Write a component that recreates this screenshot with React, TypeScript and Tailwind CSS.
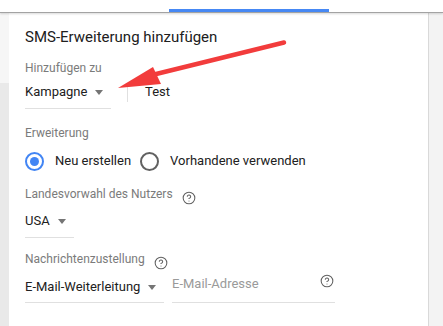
import { CircleHelp } from "lucide-react";

function Caret() {
  return <span className="ml-[8px] inline-block w-0 h-0 border-l-[4px] border-r-[4px] border-t-[5px] border-l-transparent border-r-transparent border-t-[#757575]" />;
}

function Help({ className = "" }: { className?: string }) {
  return <CircleHelp size={14} strokeWidth={1.8} className={"text-[#616161] " + className} />;
}

function Label({ children, className = "" }: { children: React.ReactNode; className?: string }) {
  return <div className={"text-[12px] leading-[16px] text-[#7b7b7b] whitespace-nowrap " + className}>{children}</div>;
}

export default function App() {
  return (
    <div className="relative w-[443px] h-[326px] overflow-hidden bg-[#f3f3f3] flex flex-col" style={{ fontFamily: "Roboto, 'Noto Sans', sans-serif" }}>
      {/* top tab strip */}
      <div className="h-[13px] bg-white border-b border-[#a3a3a3] shadow-[0_1px_2px_rgba(0,0,0,0.15)] flex items-end shrink-0 z-10">
        <div className="ml-[169px] w-[160px] h-[3px] bg-[#4688f4]" />
      </div>

      <div className="flex flex-1">
        <div className="w-[9px] flex flex-col">
          <div className="h-[70px] bg-[#f6f6f6]" />
          <div className="flex-1 bg-[#e9e9e9]" />
        </div>

        <div className="w-[420px] bg-white border-r border-[#d9d9d9] pl-[16px] pt-[14px] text-[#212121]">
          <div className="text-[15px] leading-[20px] text-[#202020]">SMS-Erweiterung hinzufügen</div>

          <Label className="mt-[13px]">Hinzufügen zu</Label>
          <div className="mt-[6px] flex h-[27px] text-[13px] leading-[20px]">
            <div className="w-[86px] border-b border-[#e0e0e0] flex items-start">
              <span className="flex items-center whitespace-nowrap">
                Kampagne
                <Caret />
              </span>
            </div>
            <div className="ml-[16px] mt-[3px] w-px h-[17px] bg-[#e0e0e0]" />
            <span className="ml-[17px]">Test</span>
          </div>

          <Label className="mt-[16px]">Erweiterung</Label>
          <div className="mt-[10px] flex items-center h-[20px] text-[13px] leading-[20px] whitespace-nowrap">
            <span className="w-[19px] h-[19px] rounded-full border-2 border-[#4285f4] flex items-center justify-center">
              <span className="w-[9px] h-[9px] rounded-full bg-[#4285f4]" />
            </span>
            <span className="ml-[11px]">Neu erstellen</span>
            <span className="ml-[9px] w-[19px] h-[19px] rounded-full border-2 border-[#616161]" />
            <span className="ml-[11px]">Vorhandene verwenden</span>
          </div>

          <div className="mt-[15px] flex items-start">
            <Label>Landesvorwahl des Nutzers</Label>
            <Help className="ml-[9px] mt-[5px]" />
          </div>
          <div className="mt-[6px] w-[49px] h-[27px] border-b border-[#e0e0e0] text-[13px] leading-[20px]">
            <span className="flex items-center">
              USA
              <Caret />
            </span>
          </div>

          <div className="mt-[13px] flex items-start">
            <Label>Nachrichtenzustellung</Label>
            <Help className="ml-[9px] mt-[5px]" />
          </div>
          <div className="mt-[7px] flex h-[26px] text-[13px] leading-[20px] whitespace-nowrap">
            <div className="w-[139px] border-b border-[#e0e0e0]">
              <span className="flex items-center">
                E-Mail-Weiterleitung
                <Caret />
              </span>
            </div>
            <div className="ml-[8px] w-[163px] border-b border-[#e0e0e0] flex items-start justify-between">
              <span className="-mt-[3px] text-[#9a9a9a]">E-Mail-Adresse</span>
              <Help className="-mt-[3px] mr-[1px]" />
            </div>
          </div>
        </div>

        <div className="flex-1 bg-[#f3f3f3]" />
      </div>

      {/* annotation arrow */}
      <svg className="absolute left-0 top-0 pointer-events-none" width="443" height="326">
        <line x1="284" y1="42.5" x2="148" y2="76" stroke="#f23c3c" strokeWidth="4.5" strokeLinecap="round" />
        <polygon points="118,88 153,67 161,84" fill="#f23c3c" />
      </svg>
    </div>
  );
}
